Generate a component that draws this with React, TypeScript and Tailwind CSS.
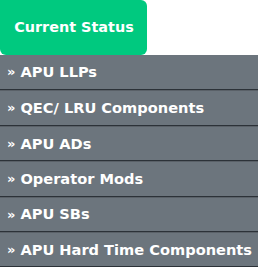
import React from "react";

const items = [
  "APU LLPs",
  "QEC/ LRU Components",
  "APU ADs",
  "Operator Mods",
  "APU SBs",
  "APU Hard Time Components",
];

export default function App() {
  return (
    <div
      className="w-[265px] h-[270px] bg-white overflow-hidden"
      style={{ fontFamily: '"DejaVu Sans", Verdana, sans-serif' }}
    >
      <div className="w-[147px] h-[55px] bg-[#00c97f] rounded-tr-[6px] rounded-b-[6px] flex items-center justify-center text-white font-bold text-[14.4px] pl-[1px]">
        Current Status
      </div>
      <div className="w-[258px] flex flex-col bg-[#6c757d]">
        {items.map((t, i) => (
          <div
            key={t}
            className={`h-[35.4px] flex items-center pl-[7px] text-white font-bold text-[14.6px] border-b border-[#2c3238] ${
              i > 0 ? "border-t border-t-[#5a6168]" : ""
            }`}
          >
            <span className="text-[13px] mr-[5px]">»</span>
            {t}
          </div>
        ))}
      </div>
    </div>
  );
}
